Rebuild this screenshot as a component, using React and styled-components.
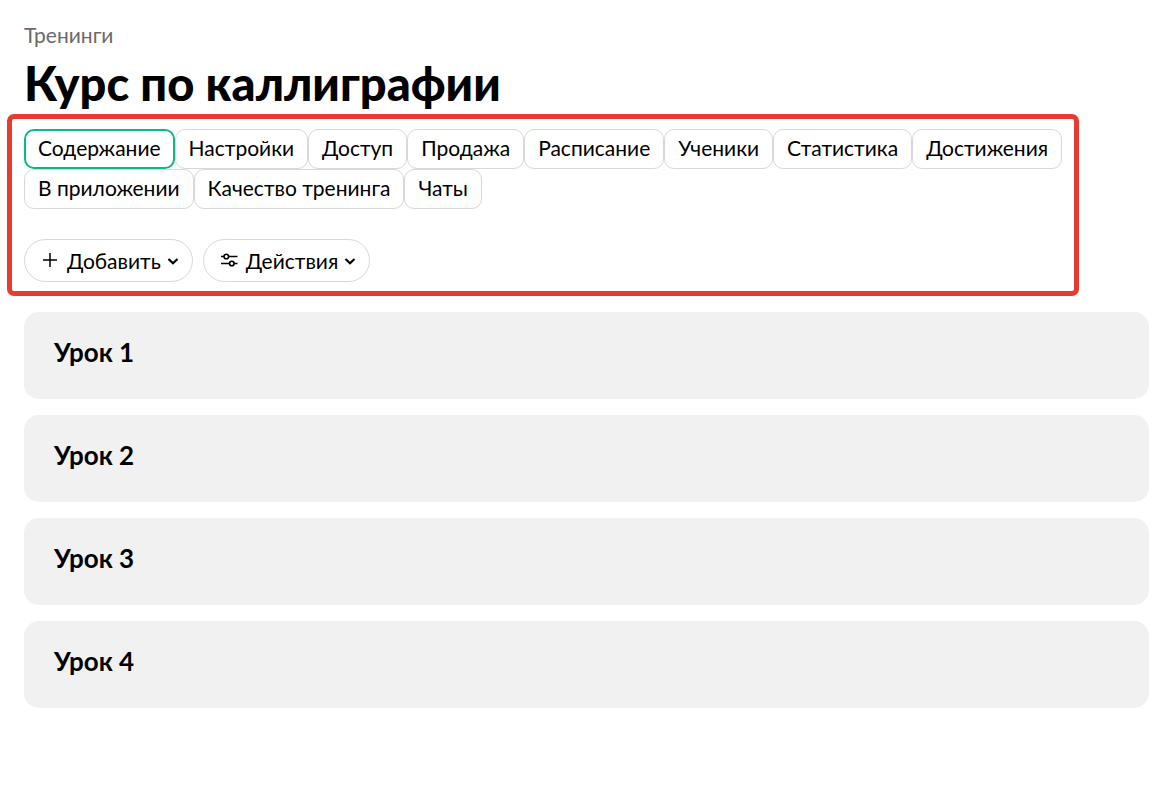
import React from "react";
import styled, { createGlobalStyle } from "styled-components";

const GlobalStyle = createGlobalStyle`
  *, *::before, *::after { box-sizing: border-box; }
  body {
    margin: 0;
    background: #fff;
    color: #000;
    font-family: Lato, "Noto Sans", sans-serif;
    font-size: 21px;
    line-height: 24px;
  }
`;

const Page = styled.main`
  padding: 23px 14px 24px 7px;
`;

const Header = styled.header`
  padding-left: 17px;
`;

const Breadcrumb = styled.a`
  display: block;
  width: fit-content;
  color: #6b6b6b;
  text-decoration: none;
`;

const Title = styled.h1`
  margin: 8px 0 0;
  padding-bottom: 3px;
  font-size: 47px;
  line-height: 56px;
  font-weight: 900;
  white-space: nowrap;
`;

const Frame = styled.section`
  margin-right: 70px;
  padding: 10px 8px 9px 12px;
  border: 5px solid #e63b30;
  border-radius: 7px;
`;

const Tabs = styled.nav`
  display: flex;
  flex-wrap: wrap;
`;

const Tab = styled.a`
  height: 40px;
  padding: ${({ $active }) => ($active ? "5px 12px" : "6px 13px")};
  border: ${({ $active }) => ($active ? "2px solid #0cb884" : "1px solid #d8d8d8")};
  border-radius: 10px;
  color: #000;
  text-decoration: none;
  white-space: nowrap;
`;

const Actions = styled.div`
  display: flex;
  gap: 10px;
  margin-top: 30px;
`;

const ActionButton = styled.button`
  display: flex;
  align-items: center;
  height: 43px;
  padding: 0 13px 0 16px;
  border: 1px solid #d8d8d8;
  border-radius: 22px;
  background: #fff;
  color: #000;
  font: inherit;
  white-space: nowrap;
  cursor: pointer;
`;

const ActionLabel = styled.span`
  margin: 0 6px 0 8px;
`;

const Icon = styled.svg`
  display: block;
  flex: none;
  fill: none;
  stroke: currentColor;
`;

const Lessons = styled.ul`
  display: grid;
  gap: 16px;
  margin: 16px 0 0 17px;
  padding: 0;
  list-style: none;
`;

const Lesson = styled.li`
  height: 87px;
  padding: 24px 30px;
  border-radius: 15px;
  background: #f1f1f1;
`;

const LessonTitle = styled.h2`
  margin: 0;
  font-size: 26px;
  line-height: 32px;
  font-weight: 700;
`;

const PlusIcon = () => (
  <Icon width="18" height="18" viewBox="0 0 18 18" strokeWidth="1.5" aria-hidden="true">
    <path d="M9 1v14M2 8h14" />
  </Icon>
);

const SlidersIcon = () => (
  <Icon width="18" height="18" viewBox="0 0 18 18" strokeWidth="1.6" aria-hidden="true">
    <path d="M1 4.5h3M8.5 4.5h9M1 11.5h8.5M14 11.5h3.5" />
    <circle cx="6.3" cy="4.5" r="2.3" />
    <circle cx="11.8" cy="11.5" r="2.3" />
  </Icon>
);

const ChevronIcon = () => (
  <Icon width="12" height="12" viewBox="0 0 12 12" strokeWidth="2.2" aria-hidden="true">
    <path d="M1.5 4 6 8.2 10.5 4" />
  </Icon>
);

const tabs = [
  "Содержание",
  "Настройки",
  "Доступ",
  "Продажа",
  "Расписание",
  "Ученики",
  "Статистика",
  "Достижения",
  "В приложении",
  "Качество тренинга",
  "Чаты",
];

const lessons = ["Урок 1", "Урок 2", "Урок 3", "Урок 4"];

export default function App() {
  return (
    <>
      <GlobalStyle />
      <Page>
        <Header>
          <Breadcrumb href="#trainings">Тренинги</Breadcrumb>
          <Title>Курс по каллиграфии</Title>
        </Header>
        <Frame>
          <Tabs>
            {tabs.map((name, i) => (
              <Tab key={name} href={`#tab-${i + 1}`} $active={i === 0} aria-current={i === 0 ? "page" : undefined}>
                {name}
              </Tab>
            ))}
          </Tabs>
          <Actions>
            <ActionButton type="button">
              <PlusIcon />
              <ActionLabel>Добавить</ActionLabel>
              <ChevronIcon />
            </ActionButton>
            <ActionButton type="button">
              <SlidersIcon />
              <ActionLabel>Действия</ActionLabel>
              <ChevronIcon />
            </ActionButton>
          </Actions>
        </Frame>
        <Lessons>
          {lessons.map((name) => (
            <Lesson key={name}>
              <LessonTitle>{name}</LessonTitle>
            </Lesson>
          ))}
        </Lessons>
      </Page>
    </>
  );
}
